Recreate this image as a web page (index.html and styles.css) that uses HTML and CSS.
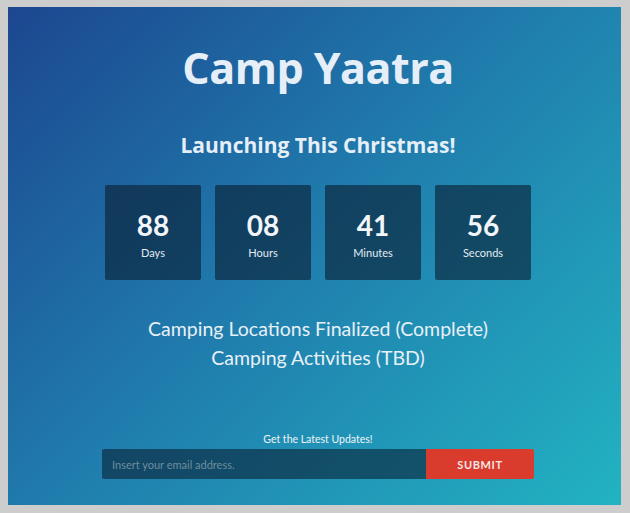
FILE: index.html
```html
<!DOCTYPE html>
<html lang="en">
<head>
<meta charset="utf-8">
<title>Camp Yaatra</title>
<link rel="stylesheet" href="styles.css">
</head>
<body>
<main class="page">
  <h1 class="title">Camp Yaatra</h1>
  <h2 class="subtitle">Launching This Christmas!</h2>
  <div class="countdown">
    <div class="unit"><span class="num">88</span><span class="label">Days</span></div>
    <div class="unit"><span class="num">08</span><span class="label">Hours</span></div>
    <div class="unit"><span class="num">41</span><span class="label">Minutes</span></div>
    <div class="unit"><span class="num">56</span><span class="label">Seconds</span></div>
  </div>
  <ul class="status">
    <li>Camping Locations Finalized (Complete)</li>
    <li>Camping Activities (TBD)</li>
  </ul>
  <form class="signup">
    <p class="signup-title">Get the Latest Updates!</p>
    <div class="signup-row">
      <input class="email" type="email" placeholder="Insert your email address.">
      <button class="submit" type="button">SUBMIT</button>
    </div>
  </form>
</main>
</body>
</html>
```

FILE: styles.css
```css
html, body {
  margin: 0;
  padding: 0;
}
body {
  background: #cdcdcd;
  padding: 7px 9px 8px 8px;
  font-family: "Lato", "Open Sans", sans-serif;
  color: #eef4fa;
}
.page {
  height: 498px;
  box-sizing: border-box;
  background: linear-gradient(135deg, #1c4790 0%, #207fae 50%, #22b3c2 100%);
  display: flex;
  flex-direction: column;
  align-items: center;
  padding-top: 30px;
  padding-left: 7px;
}
.title {
  margin: 0;
  font-family: "Open Sans", sans-serif;
  font-weight: 700;
  font-size: 43px;
  line-height: 62px;
  color: #e6eff8;
  letter-spacing: -0.5px;
}
.subtitle {
  margin: 32px 0 0;
  font-family: "Open Sans", sans-serif;
  font-weight: 700;
  font-size: 21px;
  line-height: 28px;
  color: #e6eff8;
}
.countdown {
  display: flex;
  gap: 14px;
  margin-top: 26px;
}
.unit {
  width: 96px;
  height: 95px;
  background: rgba(10, 30, 50, 0.62);
  border-radius: 2px;
  display: flex;
  flex-direction: column;
  align-items: center;
  box-sizing: border-box;
  padding-top: 23px;
}
.num {
  font-size: 28px;
  font-weight: 700;
  line-height: 34px;
  color: #f2f6fa;
}
.label {
  margin-top: 4px;
  font-size: 11px;
  line-height: 14px;
  color: #e2ebf3;
}
.status {
  list-style: none;
  margin: 34px 0 0;
  padding: 0;
  text-align: center;
  font-size: 19.5px;
  line-height: 29px;
  color: #e8f0f7;
}
.signup {
  margin-top: 61px;
  display: flex;
  flex-direction: column;
  align-items: center;
}
.signup-title {
  margin: 0 0 3px;
  font-size: 10.5px;
  line-height: 13px;
  color: #eef4f8;
}
.signup-row {
  display: flex;
  width: 432px;
  height: 30px;
}
.email {
  flex: 1;
  border: 0;
  margin: 0;
  border-radius: 2px 0 0 2px;
  background: rgba(10, 36, 56, 0.62);
  padding: 0 10px;
  font-family: "Lato", sans-serif;
  font-size: 11px;
  color: #fff;
  outline: none;
}
.email::placeholder {
  color: #6e8d9e;
}
.submit {
  width: 108px;
  border: 0;
  margin: 0;
  border-radius: 0 2px 2px 0;
  background: #d93b2c;
  color: #f4e8e6;
  font-family: "Lato", sans-serif;
  font-weight: 700;
  font-size: 11px;
  letter-spacing: 0.6px;
}
```
